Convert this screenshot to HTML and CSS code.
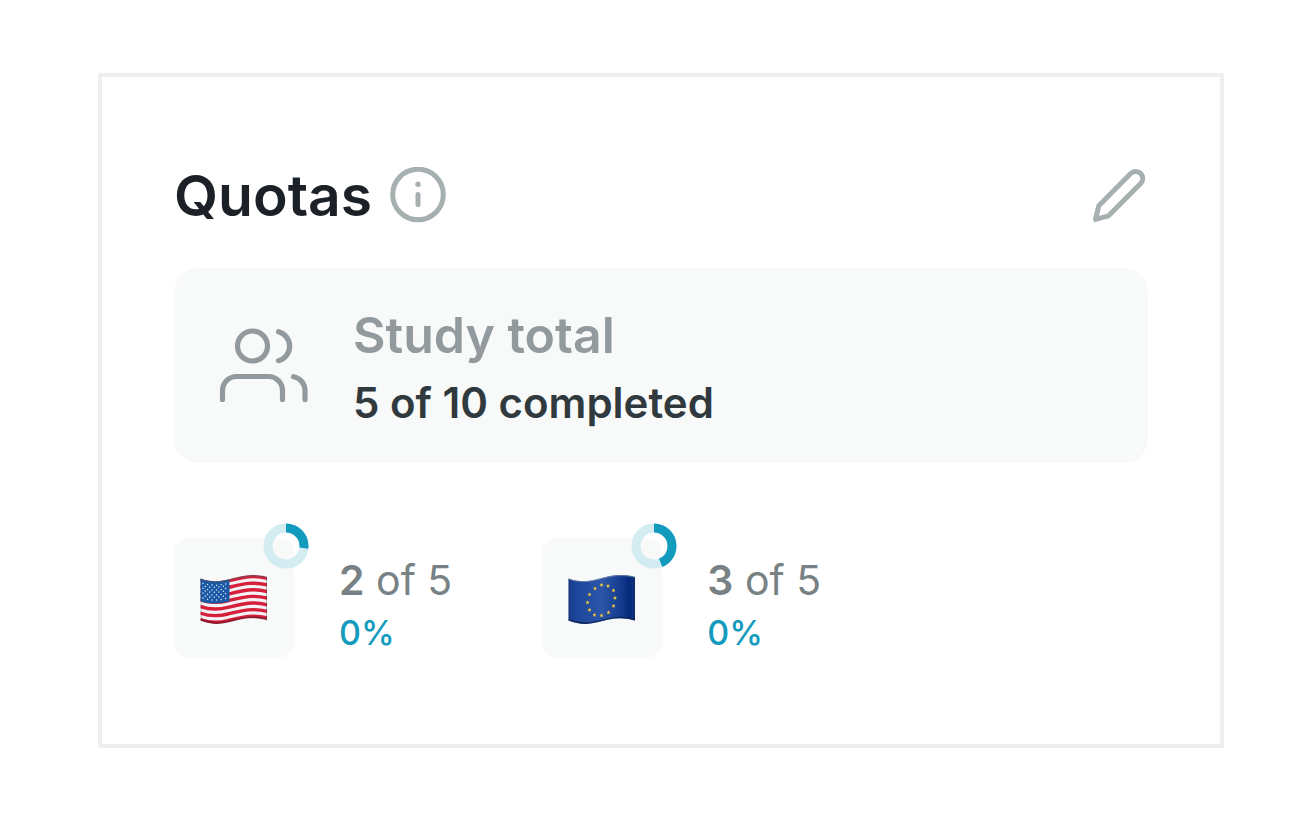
FILE: index.html
```html
<!DOCTYPE html>
<html lang="en">

<head>
    <meta charset="UTF-8">
    <meta name="viewport" content="width=device-width, initial-scale=1.0">
    <title>Quotas</title>
    <link rel="stylesheet" href="styles.css">
</head>

<body>
    <section class="card">
        <header class="card-header">
            <h1>Quotas</h1>
            <button class="icon-button" type="button" aria-label="About quotas">
                <svg class="info-icon" viewBox="0 0 56 58">
                    <circle cx="28" cy="27.500" r="25.300" fill="none" stroke="currentColor" stroke-width="5" />
                    <circle cx="28" cy="17.300" r="2.700" fill="currentColor" />
                    <path d="M28 27.500v10" stroke="currentColor" stroke-width="5" stroke-linecap="round" />
                </svg>
            </button>
            <button class="icon-button edit" type="button" aria-label="Edit quotas">
                <svg class="edit-icon" viewBox="0 0 56 54">
                    <path d="M38.700 4.600a7 7 0 0 1 10 10L16.500 46.800 3.500 50.400 6.800 36.800Z" fill="none"
                        stroke="currentColor" stroke-width="5" stroke-linejoin="round" />
                </svg>
            </button>
        </header>

        <div class="total">
            <svg class="users-icon" viewBox="0 0 90 76" fill="none" stroke="currentColor" stroke-width="5.200"
                stroke-linecap="round">
                <circle cx="33.500" cy="18" r="15" />
                <path d="M3.500 71.500V62.500A14 14 0 0 1 17.500 48.500H49.500A14 14 0 0 1 63.500 62.500V71.500" />
                <path d="M59.500 3.700A15 15 0 0 1 59.500 32.700" />
                <path d="M74.500 48.700A14 14 0 0 1 86 62.500V71.500" />
            </svg>
            <div>
                <h2>Study total</h2>
                <p class="completed">5 of 10 completed</p>
            </div>
        </div>

        <div class="quotas">
            <div class="quota">
                <div class="tile">
                    <svg class="flag" viewBox="0 0 68 50" role="img" aria-label="United States">
                        <defs>
                            <clipPath id="cloth">
                                <path d="M.5 3.500C10 7 18 7 28 4.500 42 1 52-2 67 2V45.500C52 41 42 44 28 47.500 18 50 10 49 .5 45.500Z" />
                            </clipPath>
                            <linearGradient id="blue">
                                <stop offset="0" stop-color="#183c86" />
                                <stop offset=".1" stop-color="#1c459a" />
                                <stop offset=".5" stop-color="#2b55a8" />
                                <stop offset=".8" stop-color="#12398c" />
                                <stop offset=".9" stop-color="#032a7b" />
                                <stop offset="1" stop-color="#16367b" />
                            </linearGradient>
                            <path id="stripe" d="M0 5C10 8.500 18 8.500 28 6 42 2.500 52-.5 68 3.500" />
                            <path id="star" d="M0-2.200.6-.7 2.100-.7.9.3 1.300 1.800 0 .9-1.300 1.800-.9.3-2.100-.7-.6-.7Z" />
                        </defs>
                        <g clip-path="url(#cloth)">
                            <rect width="68" height="50" fill="#f4f2f4" />
                            <g fill="none" stroke="#d51f3b" stroke-width="3.400">
                                <use href="#stripe" />
                                <use href="#stripe" y="6.600" />
                                <use href="#stripe" y="13.200" />
                                <use href="#stripe" y="19.800" />
                                <use href="#stripe" y="26.400" />
                                <use href="#stripe" y="33" />
                                <use href="#stripe" y="39.600" />
                            </g>
                            <path d="M0 3C10 7 18 7 29.500 4V26.500C18 29 10 29.500 0 26Z" fill="#1b59a6" />
                            <g fill="none" stroke="#dce8f5" stroke-width="1.500" stroke-linecap="round"
                                stroke-dasharray="0 4.600">
                                <path d="M3 8.500C12 11 18 10.500 28 8.500" />
                                <path d="M5.300 11.400C12 13 18 12.500 28 10.500" />
                                <path d="M3 13.200C12 16 18 15.500 28 13" />
                                <path d="M5.300 16C12 18 18 17.500 28 15.500" />
                                <path d="M3 18C12 21 18 20.500 28 18" />
                                <path d="M5.300 21C12 23 18 22.500 28 20.500" />
                                <path d="M3 23C12 26 18 25.500 28 23" />
                            </g>
                            <path d="M0 3.500C10 7 18 7 28 4.500 42 1 52-2 68 2" fill="none" stroke="#555" stroke-opacity=".5" stroke-width="3" />
                            <path d="M0 45.500C10 49 18 50 28 47.500 42 44 52 41 68 45.500" fill="none" stroke="#501020" stroke-opacity=".5" stroke-width="4" />
                            <path d="M1 0V50M66.500 0V50" stroke="#333" stroke-opacity=".3" />
                        </g>
                    </svg>
                    <svg class="progress" viewBox="0 0 46 46" fill="none" stroke-width="9">
                        <circle cx="23" cy="23" r="18" stroke="#d2ecf2" />
                        <circle cx="23" cy="23" r="18" stroke="#139bbd" pathLength="100" stroke-dasharray="27 73"
                            transform="rotate(-90 23 23)" />
                    </svg>
                </div>
                <div class="quota-text">
                    <p class="count"><b>2</b> of 5</p>
                    <p class="percent">0%</p>
                </div>
            </div>

            <div class="quota">
                <div class="tile">
                    <svg class="flag" viewBox="0 0 68 50" role="img" aria-label="European Union">
                        <g clip-path="url(#cloth)">
                            <rect width="68" height="50" fill="url(#blue)" />
                            <path d="M0 3.500C10 7 18 7 28 4.500 42 1 52-2 68 2" fill="none" stroke="#8794ad" stroke-opacity=".6" stroke-width="2" />
                            <path d="M0 45.500C10 49 18 50 28 47.500 42 44 52 41 68 45.500" fill="none" stroke="#0a1c4c" stroke-opacity=".7" stroke-width="3" />
                            <path d="M1 0V50M66.500 0V50" stroke="#0a1c4c" stroke-opacity=".4" />
                        </g>
                        <g fill="#f3cb3c">
                            <use href="#star" x="33.500" y="10" />
                            <use href="#star" x="40" y="11" />
                            <use href="#star" x="45.500" y="15.500" />
                            <use href="#star" x="47" y="23" />
                            <use href="#star" x="45.500" y="31" />
                            <use href="#star" x="40.500" y="37.500" />
                            <use href="#star" x="33.500" y="40.500" />
                            <use href="#star" x="26.500" y="40" />
                            <use href="#star" x="21.500" y="35" />
                            <use href="#star" x="19.500" y="27.500" />
                            <use href="#star" x="21.500" y="19.500" />
                            <use href="#star" x="27" y="13.500" />
                        </g>
                    </svg>
                    <svg class="progress" viewBox="0 0 46 46" fill="none" stroke-width="9">
                        <circle cx="23" cy="23" r="18" stroke="#d2ecf2" />
                        <circle cx="23" cy="23" r="18" stroke="#139bbd" pathLength="100" stroke-dasharray="44 56"
                            transform="rotate(-90 23 23)" />
                    </svg>
                </div>
                <div class="quota-text">
                    <p class="count"><b>3</b> of 5</p>
                    <p class="percent">0%</p>
                </div>
            </div>
        </div>
    </section>
</body>

</html>
```
FILE: styles.css
```css
* {
    box-sizing: border-box;
}

body {
    margin: 0;
    padding: 73px 92px 72px 98px;
    background-color: white;
    font-family: Inter, "Liberation Sans", sans-serif;
}

h1, h2, p {
    margin: 0;
}

svg {
    display: block;
}

.card {
    border: 4px solid #efefef;
    padding: 84px 72px 86px;
}

.card-header {
    display: flex;
    align-items: center;
    gap: 18px;
    margin-bottom: 37px;
}

h1 {
    color: #1b2126;
    font-size: 57px;
    font-weight: 600;
    line-height: 70px;
}

.icon-button {
    padding: 0;
    border: 0;
    background: none;
    color: #a6b0b0;
    cursor: pointer;
}

.info-icon {
    width: 56px;
    height: 58px;
}

.edit {
    margin-left: auto;
}

.edit-icon {
    width: 56px;
    height: 54px;
}

.total {
    display: flex;
    align-items: center;
    gap: 44px;
    padding: 30px 45px;
    border-radius: 24px;
    background-color: #f8faf9;
}

.users-icon {
    width: 90px;
    height: 76px;
    color: #929a9d;
}

h2 {
    color: #929a9d;
    font-size: 50px;
    font-weight: 600;
    line-height: 75px;
}

.completed {
    color: #30393e;
    font-size: 42px;
    font-weight: 600;
    line-height: 60px;
}

.quotas {
    display: flex;
    flex-wrap: wrap;
    gap: 90px;
    margin-top: 75px;
}

.quota {
    display: flex;
    align-items: center;
    flex: 0 0 278px;
    gap: 45px;
    white-space: nowrap;
}

.tile {
    position: relative;
    display: flex;
    align-items: center;
    justify-content: center;
    width: 120px;
    height: 120px;
    padding-top: 4px;
    border-radius: 15px;
    background-color: #f8faf9;
}

.flag {
    width: 68px;
    height: 50px;
}

/* progress ring sits on the corner of the tile */
.progress {
    position: absolute;
    top: -15px;
    right: -15px;
    width: 46px;
    height: 46px;
}

.quota-text {
    padding-top: 14px;
}

.count {
    color: #788184;
    font-size: 41px;
    line-height: 56px;
}

.count b {
    font-weight: 600;
}

.percent {
    color: #139bbd;
    font-size: 34px;
    font-weight: 500;
    line-height: 50px;
}
```
